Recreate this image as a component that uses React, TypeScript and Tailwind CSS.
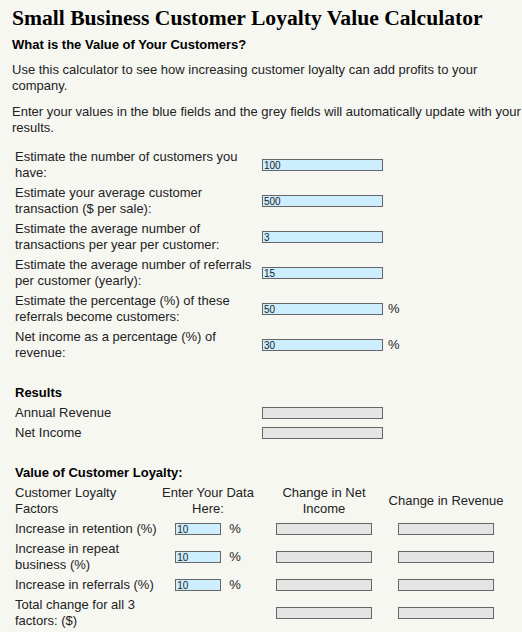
const sans = "font-['Liberation_Sans',Arial,sans-serif]"

function BlueBox({ value, w = 'w-[121px]' }: { value: string; w?: string }) {
  return (
    <input
      readOnly
      value={value}
      className={`${w} h-[12px] border border-[#666] bg-[#cdeeff] px-[1px] text-[10px] leading-none text-[#222] outline-none`}
    />
  )
}

function GreyBox({ w = 'w-[121px]' }: { w?: string }) {
  return <input readOnly value="" className={`${w} h-[12px] border border-[#666] bg-[#e4e4e4] outline-none`} />
}

const estimates = [
  { label: ['Estimate the number of customers you', 'have:'], value: '100' },
  { label: ['Estimate your average customer', 'transaction ($ per sale):'], value: '500' },
  { label: ['Estimate the average number of', 'transactions per year per customer:'], value: '3' },
  { label: ['Estimate the average number of referrals', 'per customer (yearly):'], value: '15' },
  { label: ['Estimate the percentage (%) of these', 'referrals become customers:'], value: '50', pct: true },
  { label: ['Net income as a percentage (%) of', 'revenue:'], value: '30', pct: true },
]

const factors = [
  { label: ['Increase in retention (%)'], input: true },
  { label: ['Increase in repeat', 'business (%)'], input: true },
  { label: ['Increase in referrals (%)'], input: true },
  { label: ['Total change for all 3', 'factors: ($)'], input: false },
]

export default function App() {
  return (
    <div className={`${sans} min-h-[632px] bg-[#f7f7f2] px-[12px] pt-[5px] text-[13px] leading-4 text-[#222]`}>
      <h1 className="font-['Liberation_Serif','Times_New_Roman',serif] text-[21.6px] font-bold leading-[26px] text-black">
        Small Business Customer Loyalty Value Calculator
      </h1>
      <h2 className="mt-[6px] text-[13px] font-bold leading-4 text-black">What is the Value of Your Customers?</h2>
      <p className="mt-[9px] w-[510px]">
        Use this calculator to see how increasing customer loyalty can add profits to your
        <br />
        company.
      </p>
      <p className="mt-[10px] w-[510px]">
        Enter your values in the blue fields and the grey fields will automatically update with your
        <br />
        results.
      </p>

      <div className="mt-[13px] flex flex-col gap-1 pl-[3px]">
        {estimates.map((r, i) => (
          <div key={i} className="flex items-center">
            <div className="w-[247px]">
              {r.label[0]}
              <br />
              {r.label[1]}
            </div>
            <BlueBox value={r.value} />
            {r.pct && <span className="ml-[5px]">%</span>}
          </div>
        ))}
      </div>

      <div className="mt-[24px] flex flex-col gap-1 pl-[3px]">
        <div className="font-bold text-black">Results</div>
        <div className="flex items-center">
          <div className="w-[247px]">Annual Revenue</div>
          <GreyBox />
        </div>
        <div className="flex items-center">
          <div className="w-[247px]">Net Income</div>
          <GreyBox />
        </div>
      </div>

      <div className="mt-[24px] flex flex-col gap-1 pl-[3px]">
        <div className="font-bold text-black">Value of Customer Loyalty:</div>
        <div className="flex items-center">
          <div className="w-[145px]">
            Customer Loyalty
            <br />
            Factors
          </div>
          <div className="w-[96px] text-center">
            Enter Your Data
            <br />
            Here:
          </div>
          <div className="w-[136px] text-center">
            Change in Net
            <br />
            Income
          </div>
          <div className="flex w-[108px] justify-center whitespace-nowrap">Change in Revenue</div>
        </div>
        {factors.map((f, i) => (
          <div key={i} className="flex items-center">
            <div className="w-[145px]">
              {f.label[0]}
              {f.label[1] && (
                <>
                  <br />
                  {f.label[1]}
                </>
              )}
            </div>
            <div className="flex w-[96px] items-center justify-center">
              {f.input && (
                <>
                  <BlueBox value="10" w="w-[46px]" />
                  <span className="ml-[8px]">%</span>
                </>
              )}
            </div>
            <div className="flex w-[136px] justify-center">
              <GreyBox w="w-[96px]" />
            </div>
            <div className="flex w-[108px] justify-center">
              <GreyBox w="w-[96px]" />
            </div>
          </div>
        ))}
      </div>
    </div>
  )
}
